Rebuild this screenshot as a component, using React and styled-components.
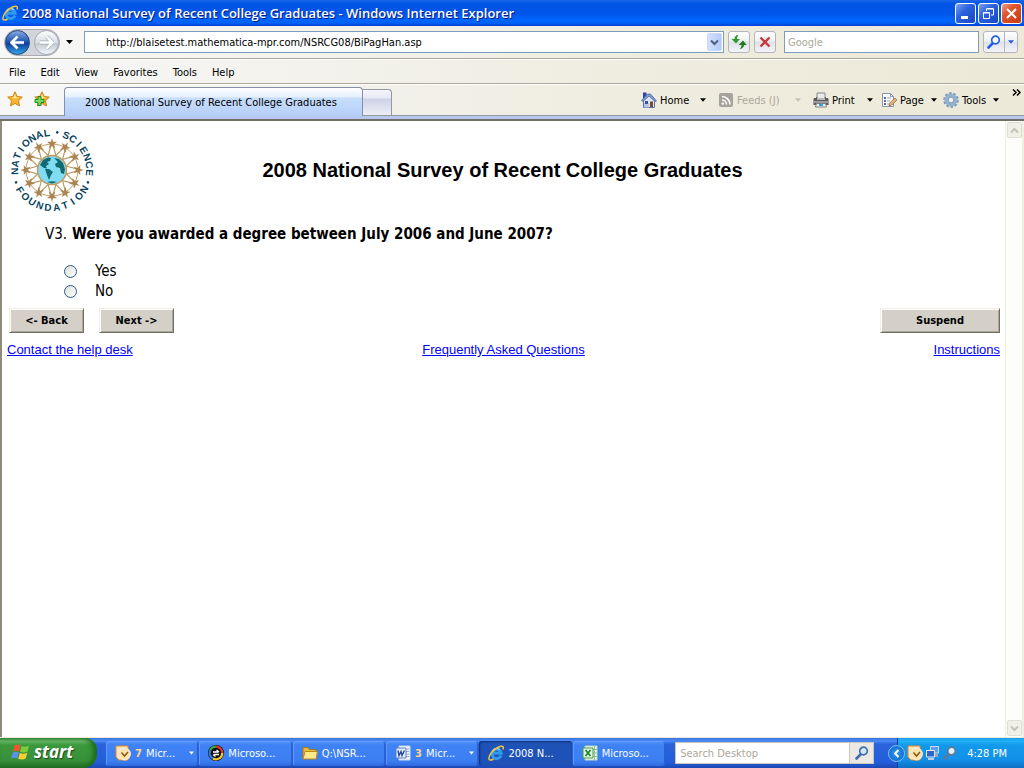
import React from "react";
import styled, { createGlobalStyle } from "styled-components";

const GlobalStyle = createGlobalStyle`
 * {
  box-sizing: border-box;
 }

 body {
  margin: 0;
  font-family: "DejaVu Sans Condensed", "DejaVu Sans", sans-serif;
  font-size: 11px;
  color: #000000;
 }

 button,
 input {
  font-family: inherit;
  font-size: inherit;
  color: inherit;
  margin: 0;
  padding: 0;
 }

 button {
  background: none;
  border: 0;
 }

 svg {
  display: block;
  flex: none;
 }
`;

const Shell = styled.div`
 display: flex;
 flex-direction: column;
 min-height: 100vh;
 background: #ffffff;
`;

const TitleBar = styled.header`
 display: flex;
 align-items: center;
 height: 26px;
 padding: 0 2px;
 gap: 2px;
 background: linear-gradient(#1a66e6 0, #0054e3 4px, #0055ea 14px, #0066ff 20px, #0062f5 23px, #003dd7 26px);
`;

const WindowTitle = styled.h1`
 flex: 1;
 margin: 0;
 padding-left: 2px;
 font-family: "Open Sans", sans-serif;
 font-size: 13px;
 line-height: 18px;
 font-weight: 600;
 color: #ffffff;
 text-shadow: 1px 1px 0 #0a1883;
 white-space: nowrap;
`;

const WindowButton = styled.button`
 display: grid;
 place-items: center;
 width: 21px;
 height: 21px;
 border: 1px solid #ffffff;
 border-radius: 3px;
 background: ${(props) =>
  props.$close
   ? "linear-gradient(135deg, #f0a08a, #e0552e 35%, #c93b10)"
   : "linear-gradient(135deg, #7ba2f0, #2c62dd 40%, #1846c4)"};
`;

const NavBar = styled.nav`
 display: flex;
 align-items: center;
 height: 33px;
 padding: 0 6px 0 4px;
 border-bottom: 1px solid #aca899;
 background: linear-gradient(90deg, #f7f7f8, #efede0 60%, #ece9d8);
`;

const TravelButtons = styled.div`
 display: flex;
 align-items: center;
 width: 80px;
`;

const TravelPair = styled.div`
 display: flex;
 align-items: center;
 gap: 4px;
 height: 27px;
 border: 1px solid #a9abb0;
 border-radius: 14px;
 background: #d2d4d9;
`;

const TravelButton = styled.button`
 display: grid;
 place-items: center;
 width: 25px;
 height: 25px;
 border: 1px solid ${(props) => (props.$on ? "#24427c" : "#a3a9b3")};
 border-radius: 50%;
 background: ${(props) =>
  props.$on
   ? "linear-gradient(#86a9e0, #2357b5 45%, #0f3f9c 55%, #2fa7ea)"
   : "linear-gradient(#fcfcfd, #d9dee6 50%, #c3cad4 55%, #f3f6f9)"};
`;

const ArrowButton = styled.button`
 display: grid;
 place-items: center;
 width: 12px;
 height: 20px;
 margin-left: 3px;
`;

const AddressBox = styled.div`
 display: flex;
 flex: 1;
 height: 22px;
 padding: 1px 1px 1px 21px;
 border: 1px solid #7f9db9;
 background: #ffffff;
`;

const FieldInput = styled.input`
 flex: 1;
 min-width: 0;
 border: 0;
 outline: 0;
 background: transparent;

 &::placeholder {
  color: #aca899;
  opacity: 1;
 }
`;

const DropButton = styled.button`
 display: grid;
 place-items: center;
 width: 15px;
 height: 18px;
 border: 1px solid #c9d8fc;
 border-radius: 2px;
 background: linear-gradient(90deg, #d3e0fd, #b4caf7);
`;

const SquareButton = styled.button`
 display: grid;
 place-items: center;
 width: 22px;
 height: 22px;
 margin-left: 4px;
 border: 1px solid #b4b6bd;
 border-radius: 3px;
 background: linear-gradient(#ffffff, #eff0f4 45%, #dfe1ea 50%, #f3f3f8);
`;

const SearchBox = styled.div`
 display: flex;
 width: 195px;
 height: 22px;
 margin: 0 4px 0 8px;
 padding: 0 3px;
 border: 1px solid #7f9db9;
 background: #ffffff;
`;

const SearchGroup = styled.div`
 display: flex;
 height: 22px;
 border: 1px solid #b4b6bd;
 border-radius: 3px;
 background: linear-gradient(#ffffff, #eff0f4 45%, #dfe1ea 50%, #f3f3f8);
`;

const SearchPart = styled.button`
 display: grid;
 place-items: center;
 width: ${(props) => (props.$narrow ? 13 : 20)}px;

 & + & {
  border-left: 1px solid #b4b6bd;
 }
`;

const MenuBar = styled.div`
 display: flex;
 align-items: center;
 gap: 15px;
 height: 25px;
 padding: 1px 9px 0;
 border-top: 1px solid #ffffff;
 border-bottom: 1px solid #aca899;
 background: linear-gradient(90deg, #f7f7f8, #efede0 60%, #ece9d8);
`;

const TabBar = styled.div`
 display: flex;
 align-items: flex-end;
 height: 32px;
 padding-left: 7px;
 border-top: 1px solid #ffffff;
 border-bottom: 1px solid #919b9c;
 background: linear-gradient(90deg, #f7f7f8, #efede0 60%, #ece9d8);
`;

const Favorites = styled.div`
 display: flex;
 align-items: flex-start;
 gap: 11px;
 width: 57px;
 height: 24px;
`;

const Tab = styled.button`
 flex: 0 0 299px;
 height: 29px;
 margin-bottom: -1px;
 padding-left: 20px;
 text-align: left;
 white-space: nowrap;
 border: 1px solid #868ea8;
 border-bottom: 0;
 border-radius: 4px 4px 0 0;
 background: linear-gradient(#ffffff, #e4effd 9px, #c7defb 10px, #b5cef8);
`;

const NewTab = styled.button`
 width: 29px;
 height: 26px;
 border: 1px solid #9298a8;
 border-left: 0;
 border-bottom: 0;
 border-radius: 0 4px 0 0;
 background: linear-gradient(#f5f5fb, #e6e8f4 8px, #ced2e6 9px, #eeeef7);
`;

const Commands = styled.div`
 display: flex;
 align-items: center;
 height: 30px;
 margin-left: auto;
`;

const Command = styled.button`
 display: flex;
 align-items: center;
 justify-content: space-between;
 width: ${(props) => props.$width}px;
 padding-right: ${(props) => props.$gap}px;
 color: ${(props) => (props.disabled ? "#aca899" : "#000000")};
 white-space: nowrap;
`;

const CommandName = styled.span`
 display: flex;
 align-items: center;
 gap: 3px;
`;

const MoreButton = styled.button`
 align-self: flex-start;
 width: 19px;
 height: 14px;
 display: grid;
 place-items: center;
 padding-left: 4px;
`;

const BlueBand = styled.div`
 height: 5px;
 border-bottom: 2px solid #716f64;
 background: #b8c7f0;
`;

const Viewport = styled.div`
 display: flex;
 flex: 1;
 border-left: 2px solid #8e8b7d;
 border-right: 2px solid #f1efe2;
`;

const Page = styled.main`
 flex: 1;
 padding: 6px 5px 0;
`;

const PageHead = styled.div`
 display: grid;
 grid-template-columns: 88px 1fr 90px;
 align-items: center;
`;

const PageTitle = styled.h2`
 margin: 0;
 font-family: "Liberation Sans", Arial, sans-serif;
 font-size: 20px;
 line-height: 24px;
 font-weight: 700;
 text-align: center;
`;

const Question = styled.fieldset`
 margin: 0 0 7px 38px;
 padding: 0;
 border: 0;
 font-size: 15px;
 line-height: 20px;
`;

const QuestionText = styled.legend`
 display: flex;
 gap: 5px;
 padding: 11px 0 17px;
`;

const Option = styled.label`
 display: flex;
 align-items: center;
 gap: 18px;
 height: 20px;
 padding-left: 19px;
`;

const Radio = styled.input`
 appearance: none;
 width: 13px;
 height: 13px;
 border: 1px solid #2a5a87;
 border-radius: 50%;
 background: linear-gradient(135deg, #dcdcd7, #ffffff);

 &:checked {
  background: radial-gradient(#21a121 0 2px, #ffffff 3px);
 }
`;

const ButtonRow = styled.div`
 display: flex;
 gap: 15px;
 padding-left: 2px;
`;

const FormButton = styled.button`
 width: ${(props) => (props.$wide ? 120 : 75)}px;
 height: 25px;
 margin-left: ${(props) => (props.$wide ? "auto" : 0)};
 padding-bottom: 1px;
 font-weight: 700;
 background: #d4d0c8;
 border: 1px solid;
 border-color: #f1efe2 #716f64 #716f64 #f1efe2;
 box-shadow: inset 1px 1px 0 #ffffff, inset -1px -1px 0 #aca899;
`;

const LinkRow = styled.div`
 display: flex;
 justify-content: space-between;
 padding-top: 8px;
 font-family: "Liberation Sans", Arial, sans-serif;
 font-size: 13px;
 line-height: 18px;
`;

const LinkCell = styled.div`
 flex: 1;
 text-align: ${(props) => props.$align};
`;

const PageLink = styled.a`
 color: #0000ff;
 text-decoration: underline;
`;

const ScrollTrack = styled.div`
 display: flex;
 flex-direction: column;
 justify-content: space-between;
 width: 17px;
 padding: 1px;
 border-left: 1px solid #eeede5;
 background: #fdfdfa;
`;

const ScrollButton = styled.button`
 display: grid;
 place-items: center;
 width: 15px;
 height: 16px;
 border: 1px solid #e0dfd2;
 border-radius: 2px;
 background: #f1f0e6;
`;

const TaskBar = styled.footer`
 display: flex;
 align-items: center;
 height: 31px;
 border-top: 1px solid #ece9d8;
 background: linear-gradient(#3a72e0 0, #4a8cf5 3px, #2a63dc 6px, #245ddb 24px, #1c48b4 30px);
 color: #ffffff;
`;

const StartButton = styled.button`
 display: flex;
 align-items: center;
 gap: 4px;
 width: 97px;
 height: 30px;
 padding: 0 0 2px 11px;
 border-radius: 0 12px 14px 0;
 background: linear-gradient(#4b9b4b 0, #6ab96a 3px, #3c983c 7px, #37913a 22px, #236f26 30px);
 box-shadow: inset -4px 0 5px #1d6b1f;
 font-family: "Open Sans", sans-serif;
 font-size: 17px;
 font-style: italic;
 font-weight: 700;
 line-height: 20px;
 text-shadow: 1px 1px 1px #1c4a1e;
`;

const Tasks = styled.div`
 display: flex;
 flex: 1;
 gap: 1px;
 margin: 0 10px 0 9px;
`;

const Task = styled.button`
 display: flex;
 align-items: center;
 flex: 1;
 gap: 4px;
 height: 25px;
 padding: 0 4px 0 9px;
 border-radius: 3px;
 white-space: nowrap;
 background: ${(props) =>
  props.$active
   ? "#1e52b7"
   : "linear-gradient(#5a95fa 0, #3f82f5 4px, #3c7ff2 20px, #2f6ade)"};
 box-shadow: ${(props) =>
  props.$active ? "inset 1px 1px 2px #10306f" : "inset 1px 1px 0 #5f9afc, inset -1px 0 0 #2c60d0"};

 svg:last-child {
  margin-left: auto;
 }
`;

const TaskCount = styled.b`
 color: #ffd488;
`;

const DesktopSearch = styled.div`
 display: flex;
 height: 22px;
 width: 199px;
 padding-left: 4px;
 border: 1px solid #c9c7ba;
 background: #ffffff;
 color: #000000;
`;

const DesktopSearchButton = styled.button`
 display: grid;
 place-items: center;
 width: 24px;
 border-left: 1px solid #c9c7ba;
 background: #ece9e4;
`;

const Tray = styled.div`
 display: flex;
 align-items: center;
 height: 30px;
 margin-left: 23px;
 padding-right: 17px;
 border-left: 1px solid #0a3ca8;
 background: linear-gradient(#1a9bee 0, #22b1f5 3px, #129aeb 7px, #1290e8 22px, #0f6fc4 30px);
`;

const TrayToggle = styled.button`
 display: grid;
 place-items: center;
 width: 17px;
 height: 17px;
 margin-left: -10px;
 margin-right: 2px;
 border: 1px solid #7fc4f7;
 border-radius: 50%;
 background: radial-gradient(#2a9df0, #0e5cc4);
`;

const TrayIcons = styled.div`
 display: flex;
 align-items: center;
 gap: 2px;
`;

const Clock = styled.time`
 margin-left: 10px;
 white-space: nowrap;
`;

function Triangle({ color = "#000000", size = 7 }) {
 return (
  <svg width={size} height="4" viewBox="0 0 7 4">
   <path d="M0 0h7L3.500 4z" fill={color} />
  </svg>
 );
}

function IeIcon({ size }) {
 return (
  <svg width={size} height={size} viewBox="0 0 16 16" fill="none">
   <path d="M13 10.500A4.600 4.600 0 1 1 13.200 8.300H5" stroke="#2f9af0" strokeWidth="3" />
   <path d="M12 4.800A4.800 4.800 0 0 0 4.300 6.500" stroke="#a8e4ff" strokeWidth="1.200" />
   <path d="M15 4.500C16 1.500 14.500.200 10.500 2 5 4.500.200 11 1 14c.400 1.600 2.500 1.300 4.500 0" stroke="#f5c33b" strokeWidth="1.500" />
  </svg>
 );
}

function ArrowGlyph({ flip, edge }) {
 const shape = "M7.500 1.500 1.500 7.500l6 6M2.500 7.500H14";
 return (
  <svg width="15" height="15" viewBox="0 0 15 15" fill="none">
   <g transform={flip ? "rotate(180 7.5 7.5)" : undefined}>
    <path d={shape} stroke={edge} strokeWidth="4" />
    <path d={shape} stroke="#ffffff" strokeWidth="2.600" />
   </g>
  </svg>
 );
}

function Chevron({ color, direction = "down" }) {
 const turns = { down: 0, left: 90, up: 180 };
 return (
  <svg width="9" height="9" viewBox="0 0 9 9">
   <path d="M1 2.500 4.500 6 8 2.500" fill="none" stroke={color} strokeWidth="2" transform={`rotate(${turns[direction]} 4.5 4.5)`} />
  </svg>
 );
}

function MagnifierIcon({ color, glass = "#ffffff", size = 14 }) {
 return (
  <svg width={size} height={size} viewBox="0 0 14 14">
   <path d="M6 8 1.500 12.500" stroke={color} strokeWidth="2.600" strokeLinecap="round" />
   <circle cx="8.500" cy="5" r="3.800" fill={glass} stroke={color} strokeWidth="1.700" />
  </svg>
 );
}

function RefreshIcon() {
 return (
  <svg width="16" height="16" viewBox="0 0 16 16" fill="#2f9a2f">
   <path d="M6.500 1C4.500 1.500 3.500 3 3.500 5H.500L5 9.500 9 5H6C6 3.500 6.300 2.500 7.500 1z" />
   <path d="M9 15c2.500-.500 4-2 4-4h2.800L12 6.500 7.500 11h3C10.500 12.500 10 14 8.500 15z" fill="#1f7d1f" />
  </svg>
 );
}

function StopIcon() {
 return (
  <svg width="12" height="12" viewBox="0 0 12 12">
   <path d="m1.500 1.500 9 9m0-9-9 9" stroke="#c8393b" strokeWidth="2.400" />
  </svg>
 );
}

function StarIcon({ add }) {
 return (
  <svg width="16" height="16" viewBox="0 0 16 16">
   <path
    d="m8 .800 2.200 4.700 5.100.600-3.800 3.600 1 5.200L8 12.400l-4.500 2.500 1-5.200L.700 6.100l5.100-.600z"
    fill="#f9b52c"
    stroke="#c98412"
   />
   <path d="m8 3 1.300 3.300 3 .400-4.300.800-4-.800 2.700-.400z" fill="#fde9a0" />
   {add && (
    <path d="M4 5.500h3V8.500h3v3H7v3H4v-3H1v-3h3z" fill="#7bdc5d" stroke="#1b8a22" />
   )}
  </svg>
 );
}

function HomeIcon() {
 return (
  <svg width="16" height="16" viewBox="0 0 16 16">
   <path d="M2 .500h3.500V6H2z" fill="#2f45a0" />
   <path d="M2.500 8.500 8 2.500 13.500 8v7.500h-11z" fill="#dfe6f6" stroke="#5a6fae" />
   <path d="M3 11h5v4.500H3z" fill="#b9c6e6" />
   <path d="M.500 8.500 6.500 2h3L15.500 9l-1.500.500L8 4 2 9.500z" fill="#7f9cd6" stroke="#4a64a8" strokeWidth=".800" />
   <path d="M9 9.500h3V15H9z" fill="#7c4a28" />
   <path d="M4 9h3v3H4z" fill="#2d57a8" />
  </svg>
 );
}

function FeedIcon() {
 return (
  <svg width="16" height="16" viewBox="0 0 16 16" fill="none">
   <rect x="1" y="1" width="14" height="14" rx="2" fill="#a5a39b" />
   <path d="M4 8a4.500 4.500 0 0 1 4.500 4.500M4 4.500a8 8 0 0 1 8 8" stroke="#ffffff" strokeWidth="1.600" />
   <circle cx="4.800" cy="11.600" r="1.200" fill="#ffffff" />
  </svg>
 );
}

function PrinterIcon() {
 return (
  <svg width="16" height="16" viewBox="0 0 16 16">
   <path d="M4 1h8v6H4z" fill="#e9e9ec" stroke="#8a8a8a" />
   <path d="M1 6h2V5h1v3h8V5h1v1h2l.500 1v6h-15V7z" fill="#5c5c60" />
   <path d="M.500 9h15v2H.500z" fill="#9b9ba0" />
   <path d="M3.500 11.500h9l1 3.500h-11z" fill="#eef4fa" stroke="#808080" />
   <path d="M6 12h4v2H6z" fill="#3aa0d8" />
  </svg>
 );
}

function PageIcon() {
 return (
  <svg width="16" height="16" viewBox="0 0 16 16">
   <path d="M1.500 1.500h8l3 3v10h-11z" fill="#fbfbfd" stroke="#8a93ad" />
   <path d="M9.500 1.500v3h3" fill="none" stroke="#8a93ad" />
   <path d="M3 5h2v2H3zM3 8h2v2H3zM3 11h2v2H3z" fill="#5b66a8" />
   <path d="M6 6h4M6 9h3M6 12h2" stroke="#9aa0b0" />
   <path d="m8 14 .800-3 5-5 2 2-5 5z" fill="#e9b878" stroke="#8b6440" strokeWidth=".800" />
  </svg>
 );
}

function GearIcon() {
 return (
  <svg width="16" height="16" viewBox="0 0 16 16" fill="none">
   <circle cx="8" cy="8" r="6.800" stroke="#7595b6" strokeWidth="2" strokeDasharray="2.600 1.670" />
   <circle cx="8" cy="8" r="4.600" stroke="#94b2d0" strokeWidth="3.800" />
   <circle cx="8" cy="8" r="2.800" fill="#f2f2ec" stroke="#6d8cad" strokeWidth=".800" />
  </svg>
 );
}

function WindowsFlag() {
 return (
  <svg width="19" height="18" viewBox="0 0 19 18">
   <path d="M3.500 2.500C6 1 7.500 1.500 9.500 2.500L8 8.500C6 7.500 4.500 7.200 2 8.500z" fill="#f0562c" />
   <path d="M10.500 3C13 4 15 4 18 2.500L16.500 8.500C14 9.800 11.500 9.800 9 8.800z" fill="#7ecb3c" />
   <path d="M1.700 9.700C4 8.300 6 8.700 7.800 9.700L6.200 15.500C4.500 14.500 2.500 14.300.200 15.500z" fill="#5b8ff0" />
   <path d="M8.800 10C11 11 13.500 11 16.200 9.700L14.700 15.500C12 17 9.500 16.500 7.200 15.800z" fill="#f9cf33" />
  </svg>
 );
}

function OutlookIcon() {
 return (
  <svg width="16" height="16" viewBox="0 0 16 16">
   <path d="M1 1h12v14H4L1 12z" fill="#fbe3bd" stroke="#e58a1f" />
   <circle cx="9.500" cy="9" r="5.800" fill="#ffe3a6" stroke="#f3ead8" strokeWidth="1.300" />
   <path d="m6.500 7.500 3 3.500L13 7" fill="none" stroke="#8a5518" strokeWidth="1.500" />
  </svg>
 );
}

function SyncIcon() {
 return (
  <svg width="16" height="16" viewBox="0 0 16 16" fill="none">
   <circle cx="8" cy="8" r="8" fill="#111111" />
   <path d="M2.200 5.500A6.300 6.300 0 0 1 8 1.700" stroke="#36a845" strokeWidth="2.200" />
   <path d="M8 1.700A6.300 6.300 0 0 1 14.300 8" stroke="#e8352a" strokeWidth="2.200" />
   <path d="M14.300 8A6.300 6.300 0 0 1 5 13.500" stroke="#f5c928" strokeWidth="2.200" />
   <path d="M5 13.500A6.300 6.300 0 0 1 2.200 5.500" stroke="#3b78e0" strokeWidth="2.200" />
   <path d="M5 7h5M8.500 5 11 7M11 9.500H6M7.500 11.500 5 9.500" stroke="#ffffff" strokeWidth="1.300" />
  </svg>
 );
}

function FolderIcon() {
 return (
  <svg width="16" height="16" viewBox="0 0 16 16">
   <path d="M1 2.500h5l1.500 2H14v9H1z" fill="#e9b93a" stroke="#a87a12" />
   <path d="M3 6.500h12.500L14 14H1z" fill="#fde88c" stroke="#b88a1c" />
  </svg>
 );
}

function WordIcon() {
 return (
  <svg width="16" height="16" viewBox="0 0 16 16" fill="none">
   <path d="M4 1h11v14H4z" fill="#f4f7fd" stroke="#c9d6ef" />
   <path d="M11 4h3M11 6.500h3M11 9h3M11 11.500h3" stroke="#8fa8d8" />
   <path d="M1 3h10v10H1z" fill="#e5edfb" stroke="#5d7fc0" />
   <path d="M3 5.500 4 10.500 6 6.500 7 10.500 9.500 5.500" stroke="#22479b" strokeWidth="1.400" />
  </svg>
 );
}

function ExcelIcon() {
 return (
  <svg width="16" height="16" viewBox="0 0 16 16" fill="none">
   <path d="M3 1h12v14H3z" fill="#f2faf1" stroke="#b9dcb8" />
   <path d="M11 4.500h4M11 8h4M11 11.500h4M12.500 1v14" stroke="#8cc08c" />
   <path d="M1 3h10v10H1z" fill="#e3f3df" stroke="#4a9a52" />
   <path d="m3.500 5 5 6m0-6-5 6" stroke="#1d8a30" strokeWidth="1.800" />
  </svg>
 );
}

function NetworkIcon() {
 return (
  <svg width="16" height="16" viewBox="0 0 16 16">
   <path d="M5.500 1.500h8V8h-8z" fill="#5f9df5" stroke="#cfdcee" />
   <path d="M10 9h3v3h-3z" fill="#9aa8bd" />
   <path d="M1.500 5.500h8V12h-8z" fill="#2f66c8" stroke="#dfe9f7" />
   <path d="M3 13h6v2H3z" fill="#c3ccda" />
  </svg>
 );
}

// angle in degrees, clockwise from the top of the seal
const sealLetters = [
 ...[..."NATIONAL"].map((char, i) => ({ char, angle: -92 + i * 12 })),
 ...[..."SCIENCE"].map((char, i) => ({ char, angle: 22 + i * 12 })),
];
const sealBottomLetters = [..."FOUNDATION"].map((char, i) => ({ char, angle: 58 - i * 13 }));
const sealStars = Array.from({ length: 12 }, (_, i) => i * 30);

const SealText = styled.text`
 font-family: "Liberation Sans", Arial, sans-serif;
 font-size: 10px;
 font-weight: 700;
 text-anchor: middle;
 fill: #0c4560;
`;

function Seal() {
 return (
  <svg width="88" height="86" viewBox="-45 -43 88 86" role="img" aria-label="National Science Foundation">
   {sealLetters.map(({ char, angle }) => (
    <SealText key={angle} y="-34" transform={`rotate(${angle})`}>
     {char}
    </SealText>
   ))}
   {sealBottomLetters.map(({ char, angle }) => (
    <SealText key={angle} y="41" transform={`rotate(${angle})`}>
     {char}
    </SealText>
   ))}
   {[8, 109, 251].map((angle) => (
    <circle key={angle} cy="-38" r="1.300" fill="#0c4560" transform={`rotate(${angle})`} />
   ))}
   <circle r="26" fill="none" stroke="#c0a36a" strokeWidth="1" />
   {sealStars.map((angle) => (
    <g key={angle} transform={`rotate(${angle})`}>
     <path d="M-1-25-4-14M1-25 4-14" stroke="#b5955a" strokeWidth="1.100" />
     <path d="m0-32 1.100 3.800h3.900l-3 2.400 1.300 4.300-3.300-2.500-3.300 2.500 1.300-4.300-3-2.400h3.900z" fill="#ab8452" />
    </g>
   ))}
   <circle r="14.500" fill="#7fdcf3" stroke="#c39a62" strokeWidth="1.500" />
   <path d="M-12-5-9-10-4-12.500-1-12-2-9-5-8-3-6-6-4-5-1.500-8-2zM-7-1-3-1 1 2-1 5-3 10-5 5zM2-12 7-11 11-7 13-1 12 4 9 3 8-2 4-3 3-6 6-8z" fill="#126a70" />
   <path d="M-5 12Q0 10.500 5 12L0 13.500z" fill="#126a70" />
  </svg>
 );
}

const commands = [
 { name: "Home", icon: <HomeIcon />, width: 77, gap: 12 },
 { name: "Feeds (J)", icon: <FeedIcon />, width: 95, gap: 12, disabled: true },
 { name: "Print", icon: <PrinterIcon />, width: 68, gap: 8 },
 { name: "Page", icon: <PageIcon />, width: 62, gap: 6 },
 { name: "Tools", icon: <GearIcon />, width: 62, gap: 6 },
];

const tasks = [
 { name: "Micr...", icon: <OutlookIcon />, count: 7 },
 { name: "Microso...", icon: <SyncIcon /> },
 { name: "Q:\\NSR...", icon: <FolderIcon /> },
 { name: "Micr...", icon: <WordIcon />, count: 3 },
 { name: "2008 N...", icon: <IeIcon size={16} />, active: true },
 { name: "Microso...", icon: <ExcelIcon /> },
];

function BrowserChrome() {
 return (
  <>
   <TitleBar>
    <IeIcon size={16} />
    <WindowTitle>2008 National Survey of Recent College Graduates - Windows Internet Explorer</WindowTitle>
    <WindowButton aria-label="Minimize">
     <svg width="13" height="13">
      <path d="M2 9h7v3H2z" fill="#ffffff" />
     </svg>
    </WindowButton>
    <WindowButton aria-label="Restore">
     <svg width="13" height="13" fill="none" stroke="#ffffff">
      <path d="M4.500 4V2h7v6H9M4.500 1.500h7M1.500 5.500h6v6h-6zM1.500 6h6" />
     </svg>
    </WindowButton>
    <WindowButton $close aria-label="Close">
     <svg width="13" height="13">
      <path d="m2 2 9 9m0-9-9 9" stroke="#ffffff" strokeWidth="2" />
     </svg>
    </WindowButton>
   </TitleBar>
   <NavBar>
    <TravelButtons>
     <TravelPair>
      <TravelButton $on aria-label="Back">
       <ArrowGlyph edge="#3a6cc0" />
      </TravelButton>
      <TravelButton aria-label="Forward">
       <ArrowGlyph flip edge="#a4abb6" />
      </TravelButton>
     </TravelPair>
     <ArrowButton aria-label="Recent pages">
      <Triangle />
     </ArrowButton>
    </TravelButtons>
    <AddressBox>
     <FieldInput aria-label="Address" defaultValue="http://blaisetest.mathematica-mpr.com/NSRCG08/BiPagHan.asp" />
     <DropButton aria-label="Show addresses">
      <Chevron color="#4d6185" />
     </DropButton>
    </AddressBox>
    <SquareButton aria-label="Refresh">
     <RefreshIcon />
    </SquareButton>
    <SquareButton aria-label="Stop">
     <StopIcon />
    </SquareButton>
    <SearchBox>
     <FieldInput aria-label="Search" placeholder="Google" />
    </SearchBox>
    <SearchGroup>
     <SearchPart aria-label="Search">
      <MagnifierIcon color="#1f5fe0" />
     </SearchPart>
     <SearchPart $narrow aria-label="Search options">
      <Triangle color="#1f5fe0" size={6} />
     </SearchPart>
    </SearchGroup>
   </NavBar>
   <MenuBar>
    {["File", "Edit", "View", "Favorites", "Tools", "Help"].map((item) => (
     <button key={item}>{item}</button>
    ))}
   </MenuBar>
   <TabBar>
    <Favorites>
     <button aria-label="Favorites Center">
      <StarIcon />
     </button>
     <button aria-label="Add to Favorites">
      <StarIcon add />
     </button>
    </Favorites>
    <Tab>2008 National Survey of Recent College Graduates</Tab>
    <NewTab aria-label="New tab" />
    <Commands>
     {commands.map(({ name, icon, width, gap, disabled }) => (
      <Command key={name} $width={width} $gap={gap} disabled={disabled}>
       <CommandName>
        {icon}
        {name}
       </CommandName>
       <Triangle color={disabled ? "#c5c2b4" : "#000000"} size={6} />
      </Command>
     ))}
     <MoreButton aria-label="More commands">
      <svg width="9" height="7" fill="none" stroke="#000000" strokeWidth="1.500">
       <path d="m1 .500 3 3-3 3M5 .500l3 3-3 3" />
      </svg>
     </MoreButton>
    </Commands>
   </TabBar>
   <BlueBand />
  </>
 );
}

function Survey() {
 return (
  <Page>
   <PageHead>
    <Seal />
    <PageTitle>2008 National Survey of Recent College Graduates</PageTitle>
   </PageHead>
   <Question>
    <QuestionText>
     V3. <b>Were you awarded a degree between July 2006 and June 2007?</b>
    </QuestionText>
    {["Yes", "No"].map((answer) => (
     <Option key={answer}>
      <Radio type="radio" name="v3" value={answer} />
      {answer}
     </Option>
    ))}
   </Question>
   <ButtonRow>
    <FormButton>&lt;- Back</FormButton>
    <FormButton>Next -&gt;</FormButton>
    <FormButton $wide>Suspend</FormButton>
   </ButtonRow>
   <LinkRow>
    <LinkCell $align="left">
     <PageLink href="#help">Contact the help desk</PageLink>
    </LinkCell>
    <LinkCell $align="center">
     <PageLink href="#faq">Frequently Asked Questions</PageLink>
    </LinkCell>
    <LinkCell $align="right">
     <PageLink href="#instructions">Instructions</PageLink>
    </LinkCell>
   </LinkRow>
  </Page>
 );
}

function DesktopTaskBar() {
 return (
  <TaskBar>
   <StartButton>
    <WindowsFlag />
    start
   </StartButton>
   <Tasks>
    {tasks.map(({ name, icon, count, active }, i) => (
     <Task key={i} $active={active}>
      {icon}
      {count && <TaskCount>{count}</TaskCount>}
      <span>{name}</span>
      {count && <Triangle color="#ffffff" size={5} />}
     </Task>
    ))}
   </Tasks>
   <DesktopSearch>
    <FieldInput aria-label="Search Desktop" placeholder="Search Desktop" />
    <DesktopSearchButton aria-label="Search">
     <MagnifierIcon color="#3d6fae" glass="#d5e8fb" />
    </DesktopSearchButton>
   </DesktopSearch>
   <Tray>
    <TrayToggle aria-label="Show hidden icons">
     <Chevron color="#ffffff" direction="left" />
    </TrayToggle>
    <TrayIcons>
     <OutlookIcon />
     <NetworkIcon />
     <MagnifierIcon color="#5f7896" glass="#e3f1ff" />
    </TrayIcons>
    <Clock>4:28 PM</Clock>
   </Tray>
  </TaskBar>
 );
}

function App() {
 return (
  <>
   <GlobalStyle />
   <Shell>
    <BrowserChrome />
    <Viewport>
     <Survey />
     <ScrollTrack>
      <ScrollButton aria-label="Scroll up">
       <Chevron color="#c5c3b8" direction="up" />
      </ScrollButton>
      <ScrollButton aria-label="Scroll down">
       <Chevron color="#c5c3b8" />
      </ScrollButton>
     </ScrollTrack>
    </Viewport>
    <DesktopTaskBar />
   </Shell>
  </>
 );
}

export default App;
